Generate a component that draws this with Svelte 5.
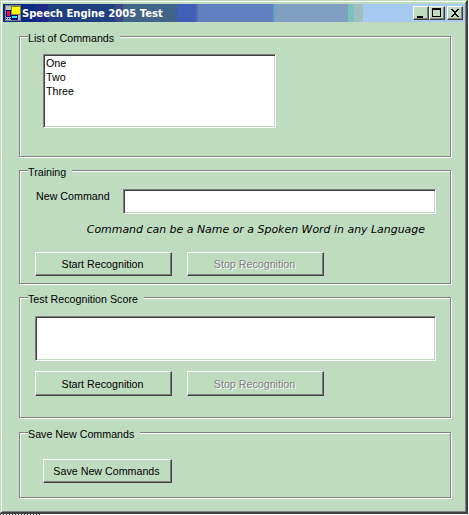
<script lang="ts">
  const commands = ['One', 'Two', 'Three'];
  let newCommand = $state('');
</script>

<div class="window">
  <header class="titlebar">
    <svg class="app-icon" width="16" height="16" viewBox="0 0 16 16" shape-rendering="crispEdges">
      <rect x="0" y="0" width="16" height="16" fill="#808080" />
      <rect x="1" y="1" width="14" height="14" fill="#c0c0c0" />
      <rect x="6" y="1" width="10" height="9" fill="#808040" />
      <rect x="7" y="2" width="8" height="7" fill="#ffff00" />
      <rect x="1" y="5" width="5" height="7" fill="#000080" />
      <rect x="2" y="6" width="3" height="5" fill="#ff0040" />
      <rect x="6" y="10" width="7" height="5" fill="#000080" />
      <rect x="7" y="11" width="5" height="2" fill="#00ffff" />
      <path d="M1 13h1v1H1zM3 13h1v1H3zM5 13h1v1H5z" fill="#000080" />
    </svg>
    <span class="title">Speech Engine 2005 Test</span>
    <div class="caption-buttons">
      <button class="caption-btn" aria-label="Minimize">
        <svg width="12" height="10" viewBox="0 0 12 10" shape-rendering="crispEdges"><rect x="2" y="8" width="6" height="2" fill="#000" /></svg>
      </button>
      <button class="caption-btn" aria-label="Maximize">
        <svg width="12" height="10" viewBox="0 0 12 10" shape-rendering="crispEdges"><path d="M1 0h9v9H1zM2 2v6h7V2z" fill="#000" fill-rule="evenodd" /></svg>
      </button>
      <button class="caption-btn close" aria-label="Close">
        <svg width="12" height="10" viewBox="0 0 12 10" shape-rendering="crispEdges"><path d="M2 1h2v1h1v1h2V2h1V1h2v1H9v1H8v1H7v2h1v1h1v1h1v1H8V8H7V7H5v1H4v1H2V8h1V7h1V6h1V4H4V3H3V2H2z" fill="#000" /></svg>
      </button>
    </div>
  </header>

  <main class="client">
    <section class="group list-group">
      <span class="legend">List of Commands</span>
      <ul class="listbox sunken">
        {#each commands as command}
          <li>{command}</li>
        {/each}
      </ul>
    </section>

    <section class="group training-group">
      <span class="legend">Training</span>
      <div class="command-row">
        <label for="new-command">New Command</label>
        <input id="new-command" class="sunken" type="text" bind:value={newCommand} />
      </div>
      <p class="hint">Command can be a Name or a Spoken Word in any Language</p>
      <div class="actions">
        <button class="btn">Start Recognition</button>
        <button class="btn" disabled>Stop Recognition</button>
      </div>
    </section>

    <section class="group score-group">
      <span class="legend">Test Recognition Score</span>
      <div class="score-box sunken"></div>
      <div class="actions">
        <button class="btn">Start Recognition</button>
        <button class="btn" disabled>Stop Recognition</button>
      </div>
    </section>

    <section class="group save-group">
      <span class="legend">Save New Commands</span>
      <button class="btn save">Save New Commands</button>
    </section>
  </main>
</div>
<div class="dither"></div>

<style>
  :global(body) {
    margin: 0;
    background: #fff;
  }

  .window {
    box-sizing: border-box;
    width: 468px;
    height: 514px;
    background: #c0dcc0;
    border-style: solid;
    border-width: 1px 2px 2px 1px;
    border-color: #c0dcc0 #404040 #404040 #c0dcc0;
    box-shadow: inset 1px 1px 0 #fff, inset -1px -1px 0 #808080;
    padding: 3px 1px 0 2px;
    display: flex;
    flex-direction: column;
    font-family: "Liberation Sans", Arial, sans-serif;
    font-size: 10.7px;
    color: #000;
  }

  .titlebar {
    height: 18px;
    flex: none;
    display: flex;
    align-items: center;
    padding: 0 2px 0 2px;
    background: linear-gradient(to right,
      #0a2a80 0, #0a2a80 32px,
      #1f2a88 32px, #1f2a88 45px,
      #1f3f80 45px, #1f3f80 112px,
      #3b4a85 112px, #3b4a85 120px,
      #406488 120px, #406488 174px,
      #4060b8 174px, #4060b8 193px,
      #5a68c0 193px, #5a68c0 195px,
      #6080c0 195px, #6080c0 270px,
      #60a0c0 270px, #60a0c0 272px,
      #7fa0c0 272px, #7fa0c0 345px,
      #7fc0c0 345px, #7fc0c0 351px,
      #a0c0c0 351px, #a0c0c0 360px,
      #a6caf0 360px);
  }

  .app-icon {
    flex: none;
    margin-right: 1px;
  }

  .title {
    flex: 1;
    color: #fff;
    font-family: "DejaVu Sans", Verdana, sans-serif;
    font-weight: 700;
    font-size: 10px;
    white-space: nowrap;
  }

  .caption-buttons {
    display: flex;
  }

  .caption-btn {
    box-sizing: border-box;
    width: 16px;
    height: 14px;
    padding: 0;
    background: #c0dcc0;
    border-style: solid;
    border-width: 1px;
    border-color: #fff #404040 #404040 #fff;
    box-shadow: inset -1px -1px 0 #808080;
    display: flex;
    align-items: center;
    justify-content: center;
  }

  .caption-btn.close {
    margin-left: 2px;
  }

  .client {
    flex: 1;
    display: flex;
    flex-direction: column;
    gap: 13px;
    padding: 14px 0 0 16px;
  }

  .group {
    position: relative;
    box-sizing: border-box;
    width: 432px;
    border: 1px solid #808080;
    box-shadow: 1px 1px 0 #fff, inset 1px 1px 0 #fff;
    padding-left: 15px;
  }

  .legend {
    position: absolute;
    top: -5px;
    left: 8px;
    padding: 0 6px 0 0;
    background: #c0dcc0;
    line-height: 13px;
    white-space: nowrap;
  }

  .list-group {
    height: 121px;
    padding: 17px 0 0 23px;
  }

  .training-group {
    height: 114px;
    padding-top: 18px;
  }

  .score-group {
    height: 121px;
    padding-top: 18px;
  }

  .save-group {
    height: 66px;
    margin-top: 1px;
    padding: 26px 0 0 23px;
  }

  .sunken {
    box-sizing: border-box;
    background: #fff;
    border-style: solid;
    border-width: 1px;
    border-color: #808080 #fff #fff #808080;
    box-shadow: inset 1px 1px 0 #404040, inset -1px -1px 0 #c0dcc0;
  }

  .listbox {
    width: 233px;
    height: 74px;
    margin: 0;
    padding: 1px 2px;
    list-style: none;
  }

  .listbox li {
    height: 14px;
    line-height: 14px;
  }

  .command-row {
    display: flex;
    align-items: flex-start;
  }

  label {
    width: 87px;
    padding-left: 1px;
    line-height: 13px;
    margin-top: 1px;
  }

  input {
    width: 313px;
    height: 25px;
    padding: 0 3px;
    font: inherit;
    outline: none;
  }

  .hint {
    margin: 8px 25px 0 0;
    text-align: right;
    font-family: "DejaVu Sans", Verdana, sans-serif;
    font-size: 10.95px;
    font-style: italic;
    line-height: 15px;
  }

  .actions {
    display: flex;
    gap: 15px;
    margin-top: 15px;
  }

  .score-box {
    width: 401px;
    height: 45px;
  }

  .score-group .actions {
    margin-top: 10px;
  }

  .btn {
    box-sizing: border-box;
    width: 137px;
    height: 24px;
    padding: 0 2px 0 0;
    background: #c0dcc0;
    font: inherit;
    color: #000;
    border-style: solid;
    border-width: 1px;
    border-color: #fff #404040 #404040 #fff;
    box-shadow: inset -1px -1px 0 #808080;
  }

  .score-group .btn {
    height: 25px;
  }

  .btn:disabled {
    color: #808080;
    text-shadow: 1px 1px 0 #fff;
  }

  .btn.save {
    width: 129px;
  }

  .dither {
    width: 40px;
    height: 1px;
    background: repeating-linear-gradient(to right, #404040 0 1px, #fff 1px 3px);
  }
</style>
